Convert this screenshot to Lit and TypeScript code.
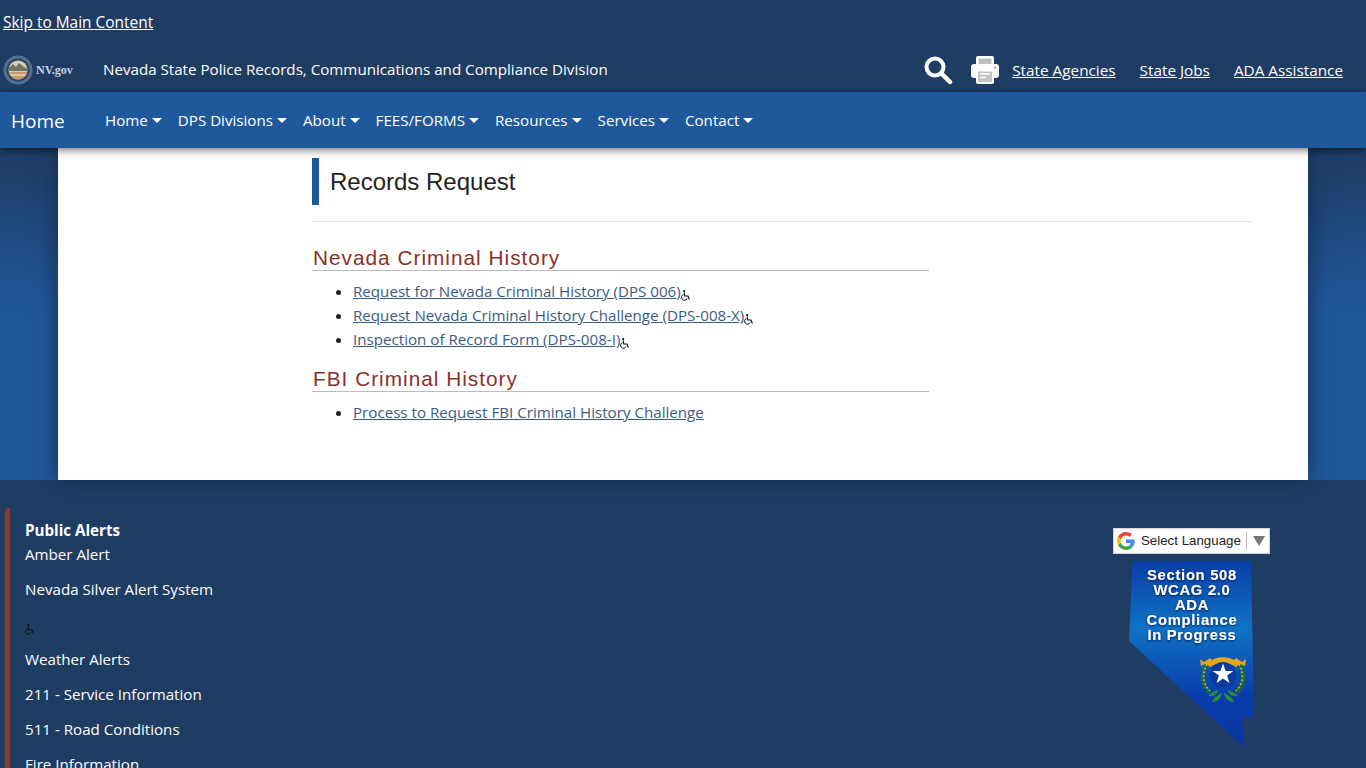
import { LitElement, html, css, svg } from 'lit';
import { customElement } from 'lit/decorators.js';

const navItems = ['Home', 'DPS Divisions', 'About', 'FEES/FORMS', 'Resources', 'Services', 'Contact'];
const alertLinks = ['Weather Alerts', '211 - Service Information', '511 - Road Conditions', 'Fire Information'];

const wheelchair = html`<svg class="chair" viewBox="0 0 10 11" width="10" height="11" aria-hidden="true">
  <circle cx="3.2" cy="1.2" r="1.1" fill="#111"></circle>
  <path d="M3.3 2.5 3.7 6H7l1.4 3.4" fill="none" stroke="#111" stroke-width="1.2"></path>
  <path d="M2.6 4.6a2.9 2.9 0 1 0 3.6 3.8" fill="none" stroke="#111" stroke-width="1"></path>
</svg>`;

const seal = svg`
  <circle cx="15" cy="15" r="14.500" fill="#55718c"></circle>
  <circle cx="15" cy="15" r="11.500" fill="#27476a"></circle>
  <circle cx="15" cy="15" r="9.500" fill="#d5d0bd"></circle>
  <path d="M5.600 13.500 10 9l3 3 3-4 5 4 3.300 2v2H6z" fill="#6f7561"></path>
  <path d="M6 17h18c-.6 4-4.500 7.500-9 7.500S6.600 21 6 17z" fill="#c99a66"></path>
  <path d="M8 19.500h14v1.200H8z" fill="#f1e7d0"></path>
`;

const leaves = (side: number) => svg`
  <g transform="translate(94 0) scale(${side} 1)">
    <path d="M-15 103c-7 9-7 21 2 30" fill="none" stroke="#1f6e38" stroke-width="5" stroke-dasharray="3 1"></path>
    <path d="M-16 104c-5 9-5 19 3 27" fill="none" stroke="#d9bd35" stroke-width="1.500" stroke-dasharray="2 2"></path>
    <path d="M-11 142c2-5 6-7 10-9-1 5-4 9-10 9zM-15 136c3-3 6-5 10-6 0 4-4 7-10 6z" fill="#2b8a45"></path>
    <path d="M-23 99l4 3 6-4 5 5c-6-.5-11 1-14 3z" fill="#e5a51d"></path>
  </g>
`;

const badgeSeal = svg`
  ${leaves(1)}
  ${leaves(-1)}
  <path d="M77 104c9-9 25-9 34 0l-4 3c-7-5-19-5-26 0z" fill="#e5a51d"></path>
  <circle cx="94" cy="115" r="13" fill="#0c3a9c"></circle>
  <path d="M94 103.500l2.600 7.400h7.800l-6.300 4.700 2.300 7.500-6.400-4.500-6.400 4.500 2.300-7.500-6.300-4.700h7.800z" fill="#fff"></path>
`;

@customElement('app-root')
export class AppRoot extends LitElement {
  static styles = css`
    :host {
      display: block;
      height: 768px;
      overflow: hidden;
      background: #1f3c63;
      color: #fff;
      font: 15.150px/24px "Open Sans", sans-serif;
    }

    a {
      color: inherit;
    }

    .skip {
      height: 46px;
      padding: 10px 3px 0;
      box-sizing: border-box;
      font-size: 15.450px;
    }

    .top {
      display: flex;
      align-items: center;
      height: 46px;
      padding: 0 23px 0 3px;
    }

    .logo {
      display: flex;
      align-items: center;
      gap: 3px;
      width: 100px;
      margin-top: 2px;
      font: bold 12px "Liberation Serif", serif;
      color: #ccd3dd;
    }

    .agency {
      flex: 1;
      margin-top: -1px;
    }

    .tools {
      display: flex;
      align-items: center;
      gap: 24px;
      margin-top: 2px;
      font-size: 15.300px;
    }

    .icon-btns {
      display: flex;
      align-items: center;
      gap: 17px;
      margin-right: -12px;
    }

    .icon-btns svg {
      display: block;
    }

    nav {
      position: relative;
      z-index: 2;
      display: flex;
      align-items: center;
      height: 56px;
      padding-left: 11px;
      background: #20589c;
      box-shadow: 0 2px 8px rgba(0, 0, 0, 0.55);
    }

    .brand {
      width: 94px;
      padding-top: 2px;
      font-size: 19px;
      text-decoration: none;
    }

    .nav-list {
      display: flex;
      gap: 16px;
    }

    .nav-item {
      text-decoration: none;
      white-space: nowrap;
    }

    .nav-item::after {
      content: "";
      display: inline-block;
      margin-left: 4px;
      vertical-align: 3px;
      border-top: 5px solid #fff;
      border-left: 5px solid transparent;
      border-right: 5px solid transparent;
    }

    main {
      padding: 0 58px;
      background: linear-gradient(#1f3c63, #20589c 50%);
    }

    .panel {
      height: 332px;
      padding: 10px 56px 0 254px;
      box-sizing: border-box;
      background: #fff;
      color: #222;
      box-shadow: 0 0 22px rgba(18, 42, 76, 0.9);
    }

    h1 {
      margin: 0;
      padding-left: 11px;
      height: 47px;
      border-left: 7px solid #20589c;
      font: 24px/47px "Liberation Sans", sans-serif;
      color: #222;
    }

    hr {
      margin: 16px 0 24px;
      border: 0;
      border-top: 1px solid #e4e4e4;
    }

    h2 {
      width: 617px;
      margin: 0;
      padding-left: 1px;
      box-sizing: border-box;
      border-bottom: 1px solid #bbb;
      font: 20.800px/24px "Liberation Sans", sans-serif;
      letter-spacing: 1px;
      color: #8b2f2a;
    }

    ul {
      margin: 8px 0 16px;
      padding-left: 41px;
    }

    li {
      height: 24px;
    }

    li a {
      color: #3b5b84;
    }

    .chair {
      vertical-align: -4px;
    }

    footer {
      display: flex;
      justify-content: space-between;
      padding: 28px 96px 0 5px;
    }

    .alerts {
      padding: 10px 0 0 15px;
      border-left: 5px solid #9a3526;
      border-radius: 3px 0 0 0;
    }

    .alerts strong {
      display: block;
    }

    .alerts a {
      display: block;
      height: 35px;
      text-decoration: none;
    }

    .alerts .chair-row {
      height: 35px;
      padding-top: 1px;
      box-sizing: border-box;
    }

    .aside {
      display: flex;
      flex-direction: column;
      align-items: flex-start;
      gap: 6px;
      padding-top: 20px;
    }

    .lang {
      display: flex;
      align-items: center;
      width: 157px;
      height: 26px;
      padding-left: 3px;
      box-sizing: border-box;
      background: #fff;
      border: 1px solid #d5d5d5;
      color: #222;
      font: 13.300px "Liberation Sans", sans-serif;
    }

    .lang svg {
      margin-right: 6px;
    }

    .lang .label {
      padding-bottom: 2px;
    }

    .lang .sep {
      width: 1px;
      height: 18px;
      margin: 0 5px;
      background: #bbb;
    }

    .lang .arrow {
      width: 0;
      height: 0;
      margin-left: 1px;
      border-top: 10px solid #777;
      border-left: 6px solid transparent;
      border-right: 6px solid transparent;
    }

    .badge {
      display: block;
      margin-left: 16px;
    }

    .badge text {
      font: bold 14.800px "Liberation Sans", sans-serif;
      letter-spacing: 0.7px;
      fill: #fff;
      text-anchor: middle;
    }
  `;

  render() {
    return html`
      <div class="skip"><a href="#main">Skip to Main Content</a></div>
      <header class="top">
        <div class="logo">
          <svg width="30" height="30" viewBox="0 0 30 30">${seal}</svg>
          <span>NV.gov</span>
        </div>
        <div class="agency">Nevada State Police Records, Communications and Compliance Division</div>
        <div class="tools">
          <div class="icon-btns">
            <svg width="30" height="30" viewBox="0 0 30 30">
              <circle cx="12" cy="12" r="8.500" fill="none" stroke="#fff" stroke-width="4"></circle>
              <path d="M18.500 18.500 27 27" stroke="#fff" stroke-width="4.500" stroke-linecap="round"></path>
            </svg>
            <svg width="30" height="30" viewBox="0 0 30 30">
              <rect x="6" y="1" width="18" height="10" rx="2" fill="#fff"></rect>
              <rect x="8.500" y="3.500" width="13" height="7" fill="#bdbdbd"></rect>
              <rect x="1" y="9" width="28" height="14" rx="3" fill="#fff"></rect>
              <circle cx="25" cy="12.500" r="1.500" fill="#bdbdbd"></circle>
              <rect x="6" y="15" width="18" height="14" rx="2" fill="#fff"></rect>
              <rect x="8" y="16.500" width="14" height="10.500" fill="#c4c4c4"></rect>
              <path d="M10 19h10M10 22.500h6" stroke="#fff" stroke-width="1.500"></path>
            </svg>
          </div>
          <a href="#">State Agencies</a>
          <a href="#">State Jobs</a>
          <a href="#">ADA Assistance</a>
        </div>
      </header>
      <nav>
        <a class="brand" href="#">Home</a>
        <div class="nav-list">
          ${navItems.map((item) => html`<a class="nav-item" href="#">${item}</a>`)}
        </div>
      </nav>
      <main id="main">
        <div class="panel">
          <h1>Records Request</h1>
          <hr />
          <h2>Nevada Criminal History</h2>
          <ul>
            <li><a href="#">Request for Nevada Criminal History (DPS 006)</a>${wheelchair}</li>
            <li><a href="#">Request Nevada Criminal History Challenge (DPS-008-X)</a>${wheelchair}</li>
            <li><a href="#">Inspection of Record Form (DPS-008-I)</a>${wheelchair}</li>
          </ul>
          <h2>FBI Criminal History</h2>
          <ul>
            <li><a href="#">Process to Request FBI Criminal History Challenge</a></li>
          </ul>
        </div>
      </main>
      <footer>
        <div class="alerts">
          <strong>Public Alerts</strong>
          <a href="#">Amber Alert</a>
          <a href="#">Nevada Silver Alert System</a>
          <div class="chair-row">${wheelchair}</div>
          ${alertLinks.map((item) => html`<a href="#">${item}</a>`)}
        </div>
        <div class="aside">
          <div class="lang">
            <svg width="18" height="18" viewBox="0 0 48 48">
              <path fill="#EA4335" d="M24 9.500c3.500 0 6.700 1.300 9.100 3.500l6.800-6.800C35.800 2.400 30.200 0 24 0 14.600 0 6.500 5.400 2.600 13.200l7.900 6.200C12.400 13.700 17.700 9.500 24 9.500z"></path>
              <path fill="#4285F4" d="M46.900 24.500c0-1.600-.2-3.100-.4-4.500H24v9h12.900c-.6 3-2.200 5.500-4.800 7.200l7.700 6c4.500-4.200 7.100-10.300 7.100-17.700z"></path>
              <path fill="#FBBC05" d="M10.500 28.600c-.5-1.400-.8-3-.8-4.600s.3-3.200.8-4.600l-7.900-6.200C.9 16.500 0 20.100 0 24s.9 7.500 2.600 10.800z"></path>
              <path fill="#34A853" d="M24 48c6.500 0 11.900-2.100 15.900-5.800l-7.700-6c-2.200 1.400-5 2.300-8.200 2.300-6.300 0-11.600-4.200-13.500-9.900l-7.900 6.200C6.500 42.600 14.600 48 24 48z"></path>
            </svg>
            <span class="label">Select Language</span><span class="sep"></span><span class="arrow"></span>
          </div>
          <svg class="badge" width="128" height="190" viewBox="0 0 128 190">
            <defs>
              <linearGradient id="state" x1="0" y1="0" x2="0" y2="1">
                <stop offset="0" stop-color="#0a3ea6"></stop>
                <stop offset="0.36" stop-color="#0f73c4"></stop>
                <stop offset="0.72" stop-color="#0a3cab"></stop>
                <stop offset="1" stop-color="#0834a0"></stop>
              </linearGradient>
              <filter id="lift" x="-10%" y="-10%" width="120%" height="130%">
                <feDropShadow dx="0" dy="1" stdDeviation="1.200" flood-color="#02184d"></feDropShadow>
              </filter>
            </defs>
            <path d="M3.500 1H122l3 158-12.500-2 3 31L0 81z" fill="url(#state)"></path>
            <g filter="url(#lift)">
              <text x="63" y="20">Section 508</text>
              <text x="63" y="35">WCAG 2.0</text>
              <text x="63" y="50">ADA</text>
              <text x="63" y="65">Compliance</text>
              <text x="63" y="80">In Progress</text>
            </g>
            ${badgeSeal}
          </svg>
        </div>
      </footer>
    `;
  }
}
